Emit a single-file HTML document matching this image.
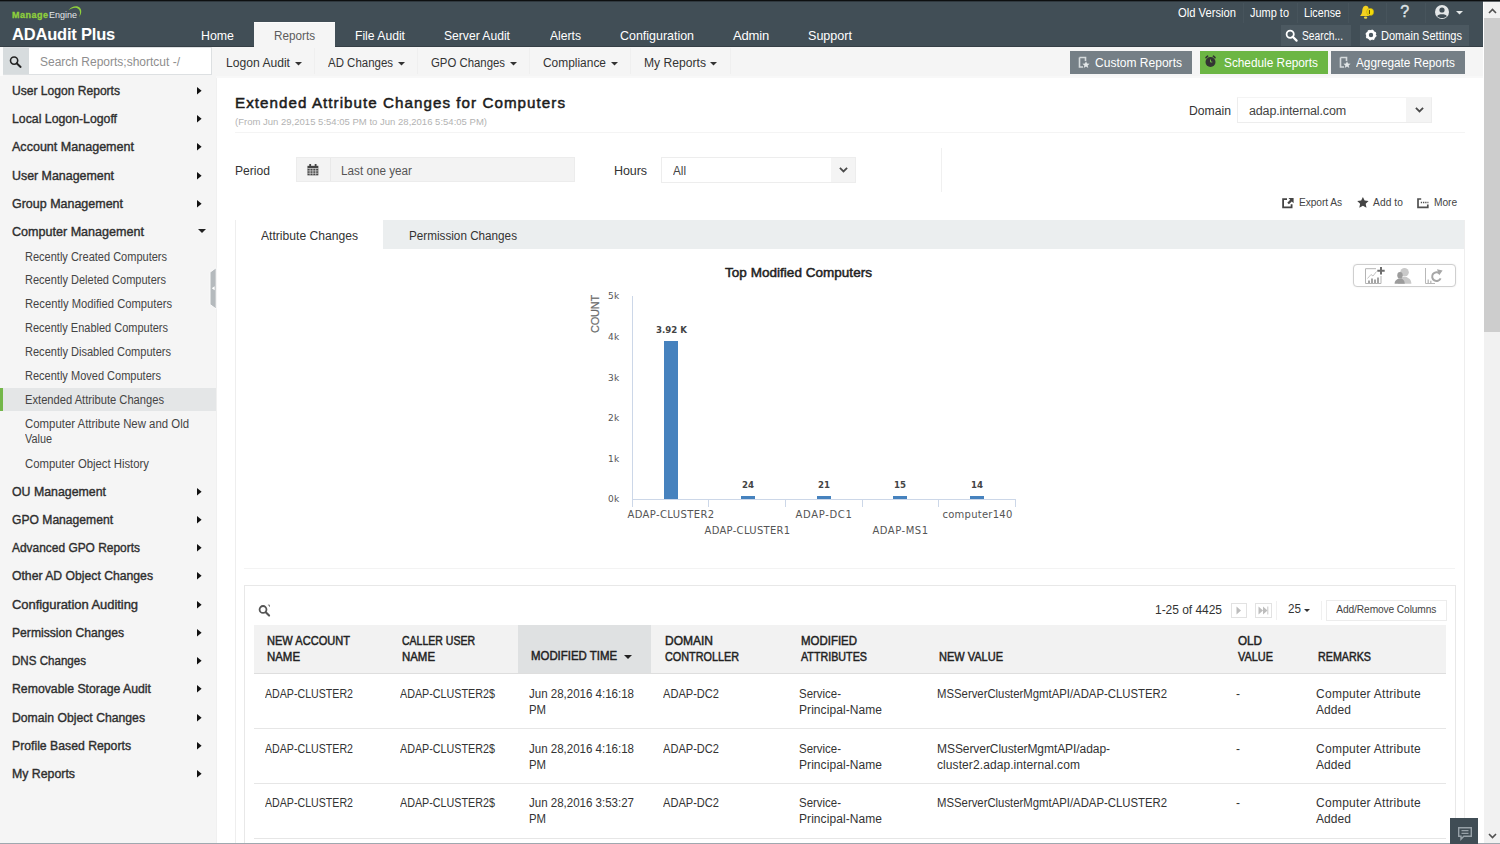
<!DOCTYPE html>
<html lang="en"><head><meta charset="utf-8"><title>ADAudit Plus - Extended Attribute Changes for Computers</title>
<style>
html,body{margin:0;padding:0;}
body{width:1500px;height:844px;overflow:hidden;background:#fff;position:relative;font-family:"Liberation Sans", sans-serif;}
.b{position:absolute;box-sizing:border-box;}
.t{position:absolute;white-space:pre;line-height:20px;height:20px;font-family:"Liberation Sans", sans-serif;}
.d{font-family:"DejaVu Sans", "Liberation Sans", sans-serif;}
svg{position:absolute;overflow:visible;}
</style></head><body>
<header>
<div class="b" style="left:0px;top:0px;width:1483px;height:47px;background:#414e56;"></div>
<div class="b" style="left:0px;top:46px;width:1483px;height:1px;background:#353f46;"></div>
<div class="b" style="left:0px;top:0px;width:1500px;height:1px;background:#0d0f10;"></div>
<div class="b" style="left:0px;top:1px;width:1500px;height:1px;background:#2a3137;opacity:.75;"></div>
<div class="b" style="left:254px;top:22px;width:81px;height:25px;background:#f5f5f5;border-top:1px solid #fcfcfc;"></div>
<svg style="left:68px;top:6px" width="16" height="14" viewBox="0 0 16 14"><path d="M0.5 4.2 C3.5 0.8 8.2 -1.2 11.6 1.6 C14.2 4 13.6 8.4 11 11.4 C12.4 8.2 12.6 4.8 10.4 2.9 C7.8 0.8 3.8 2 0.5 4.2 Z" fill="#8fd03c"/></svg>
<div class="b" style="left:1243px;top:3px;width:1px;height:20px;background:#47545c;"></div>
<div class="b" style="left:1297px;top:3px;width:1px;height:20px;background:#47545c;"></div>
<div class="b" style="left:1348px;top:3px;width:1px;height:20px;background:#47545c;"></div>
<div class="b" style="left:1386px;top:3px;width:1px;height:20px;background:#47545c;"></div>
<div class="b" style="left:1425px;top:3px;width:1px;height:20px;background:#47545c;"></div>
<svg style="left:1359px;top:5px" width="16" height="15" viewBox="0 0 16 15"><path d="M7 0.7 C4.3 0.7 3.5 3 3.3 5.4 C3.1 8 2.3 9.6 1 10.9 L10 10.9 L9.6 3 C9 1.4 8.2 0.7 7 0.7 Z" fill="#f5d21f"/><ellipse cx="6.6" cy="12.7" rx="1.7" ry="1.1" fill="#e9d545"/><circle cx="11.2" cy="6.9" r="3.6" fill="#f3da08" stroke="#8a7a20" stroke-width="0.35"/><rect x="9.9" y="4.9" width="1.1" height="4.2" rx="0.4" fill="#5e4d05"/></svg>
<svg style="left:1434px;top:4px" width="32" height="16" viewBox="0 0 32 16"><circle cx="8" cy="8" r="7" fill="#e4e7e8"/><circle cx="8" cy="6" r="2.6" fill="#404d55"/><path d="M3.2 12.2 C4 9.6 12 9.6 12.8 12.2 C11 14.6 5 14.6 3.2 12.2 Z" fill="#404d55"/><path d="M22 7 L29 7 L25.5 10.5 Z" fill="#e4e7e8"/></svg>
<div class="b" style="left:1281px;top:25px;width:70px;height:21px;background:#4c5961;"></div>
<div class="b" style="left:1360px;top:25px;width:109px;height:21px;background:#4c5961;"></div>
<svg style="left:1285px;top:29px" width="13" height="13" viewBox="0 0 13 13"><circle cx="5.2" cy="5.2" r="3.6" fill="none" stroke="#fff" stroke-width="1.8"/><path d="M8 8 L11.6 11.6" stroke="#fff" stroke-width="2.2" stroke-linecap="round"/></svg>
<svg style="left:1365px;top:29px" width="12" height="12" viewBox="0 0 12 12"><circle cx="6" cy="6" r="3.6" fill="none" stroke="#fff" stroke-width="2.8"/><circle cx="6" cy="6" r="4.9" fill="none" stroke="#fff" stroke-width="1.2" stroke-dasharray="1.9 1.95"/></svg>
<span class="t" style="left:12px;top:4.6px;font-size:9px;color:#8fd03c;letter-spacing:0.497px;font-weight:bold;-webkit-text-stroke:0.3px #8fd03c;">Manage</span>
<span class="t" style="left:48.5px;top:4.6px;font-size:9.3px;color:#e3e7ea;transform:scaleX(0.9671);transform-origin:0 50%;">Engine</span>
<span class="t" style="left:12px;top:23.5px;font-size:16.5px;color:#ffffff;letter-spacing:-0.202px;font-weight:bold;">ADAudit Plus</span>
<span class="t" style="left:201px;top:25.6px;font-size:13px;color:#ffffff;transform:scaleX(0.9514);transform-origin:0 50%;">Home</span>
<span class="t" style="left:355px;top:25.6px;font-size:13px;color:#ffffff;transform:scaleX(0.9349);transform-origin:0 50%;">File Audit</span>
<span class="t" style="left:444px;top:25.6px;font-size:13px;color:#ffffff;transform:scaleX(0.9318);transform-origin:0 50%;">Server Audit</span>
<span class="t" style="left:550px;top:25.6px;font-size:13px;color:#ffffff;transform:scaleX(0.9328);transform-origin:0 50%;">Alerts</span>
<span class="t" style="left:620px;top:25.6px;font-size:13px;color:#ffffff;transform:scaleX(0.9570);transform-origin:0 50%;">Configuration</span>
<span class="t" style="left:733px;top:25.6px;font-size:13px;color:#ffffff;letter-spacing:-0.172px;">Admin</span>
<span class="t" style="left:808px;top:25.6px;font-size:13px;color:#ffffff;transform:scaleX(0.9660);transform-origin:0 50%;">Support</span>
<span class="t" style="left:274px;top:25.6px;font-size:13px;color:#5c5c5c;transform:scaleX(0.9005);transform-origin:0 50%;">Reports</span>
<span class="t" style="left:1178px;top:2.6px;font-size:12px;color:#ffffff;transform:scaleX(0.9348);transform-origin:0 50%;">Old Version</span>
<span class="t" style="left:1250px;top:2.6px;font-size:12px;color:#ffffff;transform:scaleX(0.9136);transform-origin:0 50%;">Jump to</span>
<span class="t" style="left:1304px;top:2.6px;font-size:12px;color:#ffffff;transform:scaleX(0.8943);transform-origin:0 50%;">License</span>
<span class="t" style="left:1400.3px;top:2.2px;font-size:16px;color:#dfe3e6;-webkit-text-stroke:0.45px #dfe3e6;">?</span>
<span class="t" style="left:1302px;top:25.6px;font-size:12px;color:#ffffff;transform:scaleX(0.8536);transform-origin:0 50%;">Search...</span>
<span class="t" style="left:1381px;top:25.6px;font-size:12px;color:#ffffff;transform:scaleX(0.9200);transform-origin:0 50%;">Domain Settings</span>
</header>
<nav>
<div class="b" style="left:0px;top:47px;width:1483px;height:29px;background:#f5f5f5;"></div>
<div class="b" style="left:216px;top:76px;width:1267px;height:2px;background:#f8f8f8;"></div>
<div class="b" style="left:0px;top:47px;width:3px;height:29px;background:#fbfbfb;"></div>
<div class="b" style="left:3px;top:47px;width:209px;height:28px;background:#dde0e2;"></div>
<div class="b" style="left:3px;top:48px;width:26px;height:26px;background:#d7dcde;"></div>
<div class="b" style="left:29px;top:48px;width:182px;height:26px;background:#ffffff;"></div>
<svg style="left:9px;top:55px" width="14" height="14" viewBox="0 0 14 14"><circle cx="5.1" cy="5.6" r="3.6" fill="none" stroke="#222" stroke-width="1.6"/><path d="M7.9 8.4 L11.6 11.9" stroke="#222" stroke-width="2" stroke-linecap="round"/></svg>
<svg style="left:294.5px;top:62px" width="7" height="3.5" viewBox="0 0 7 3.5"><path d="M0 0 L7 0 L3.5 3.5 Z" fill="#333"/></svg>
<svg style="left:397.5px;top:62px" width="7" height="3.5" viewBox="0 0 7 3.5"><path d="M0 0 L7 0 L3.5 3.5 Z" fill="#333"/></svg>
<svg style="left:509.5px;top:62px" width="7" height="3.5" viewBox="0 0 7 3.5"><path d="M0 0 L7 0 L3.5 3.5 Z" fill="#333"/></svg>
<svg style="left:610.5px;top:62px" width="7" height="3.5" viewBox="0 0 7 3.5"><path d="M0 0 L7 0 L3.5 3.5 Z" fill="#333"/></svg>
<svg style="left:709.5px;top:62px" width="7" height="3.5" viewBox="0 0 7 3.5"><path d="M0 0 L7 0 L3.5 3.5 Z" fill="#333"/></svg>
<div class="b" style="left:314px;top:48px;width:1px;height:26px;background:#efefef;"></div>
<div class="b" style="left:417px;top:48px;width:1px;height:26px;background:#efefef;"></div>
<div class="b" style="left:529px;top:48px;width:1px;height:26px;background:#efefef;"></div>
<div class="b" style="left:630px;top:48px;width:1px;height:26px;background:#efefef;"></div>
<div class="b" style="left:730px;top:48px;width:1px;height:26px;background:#efefef;"></div>
<div class="b" style="left:1070px;top:51px;width:122px;height:23px;background:#757f86;"></div>
<div class="b" style="left:1200px;top:51px;width:128px;height:23px;background:#6cb644;"></div>
<div class="b" style="left:1331px;top:51px;width:134px;height:23px;background:#757f86;"></div>
<svg style="left:1078px;top:56px" width="12" height="13" viewBox="0 0 12 13"><path d="M1.5 1.5 L7.5 1.5 L7.5 5 M1.5 1.5 L1.5 11 L5 11" fill="none" stroke="#d5dadc" stroke-width="1.6"/><path d="M8 5.2 L9 7.6 L11.6 7.8 L9.6 9.4 L10.3 12 L8 10.6 L5.7 12 L6.4 9.4 L4.4 7.8 L7 7.6 Z" fill="#e3e7e8"/></svg>
<svg style="left:1339px;top:56px" width="12" height="13" viewBox="0 0 12 13"><path d="M1.5 1.5 L7.5 1.5 L7.5 5 M1.5 1.5 L1.5 11 L5 11" fill="none" stroke="#d5dadc" stroke-width="1.6"/><path d="M8 5.2 L9 7.6 L11.6 7.8 L9.6 9.4 L10.3 12 L8 10.6 L5.7 12 L6.4 9.4 L4.4 7.8 L7 7.6 Z" fill="#e3e7e8"/></svg>
<svg style="left:1204px;top:55px" width="13" height="13" viewBox="0 0 13 13"><circle cx="6.5" cy="7" r="5" fill="#333"/><path d="M2 2.6 L3.6 1.2 M11 2.6 L9.4 1.2" stroke="#333" stroke-width="1.6" stroke-linecap="round"/><path d="M6.5 4.5 L6.5 7 L8.3 7" stroke="#6cb644" stroke-width="1" fill="none"/></svg>
<span class="t" style="left:40px;top:51.6px;font-size:12.5px;color:#8e8e8e;transform:scaleX(0.9595);transform-origin:0 50%;">Search Reports;shortcut -/</span>
<span class="t" style="left:226px;top:52.6px;font-size:12.5px;color:#333;transform:scaleX(0.9690);transform-origin:0 50%;">Logon Audit</span>
<span class="t" style="left:328px;top:52.6px;font-size:12.5px;color:#333;transform:scaleX(0.9171);transform-origin:0 50%;">AD Changes</span>
<span class="t" style="left:431px;top:52.6px;font-size:12.5px;color:#333;transform:scaleX(0.9102);transform-origin:0 50%;">GPO Changes</span>
<span class="t" style="left:543px;top:52.6px;font-size:12.5px;color:#333;transform:scaleX(0.9543);transform-origin:0 50%;">Compliance</span>
<span class="t" style="left:644px;top:52.6px;font-size:12.5px;color:#333;transform:scaleX(0.9702);transform-origin:0 50%;">My Reports</span>
<span class="t" style="left:1095px;top:52.6px;font-size:12.5px;color:#ffffff;transform:scaleX(0.9633);transform-origin:0 50%;">Custom Reports</span>
<span class="t" style="left:1224px;top:52.6px;font-size:12.5px;color:#ffffff;transform:scaleX(0.9459);transform-origin:0 50%;">Schedule Reports</span>
<span class="t" style="left:1356px;top:52.6px;font-size:12.5px;color:#ffffff;transform:scaleX(0.9434);transform-origin:0 50%;">Aggregate Reports</span>
</nav>
<aside>
<div class="b" style="left:0px;top:76px;width:216px;height:768px;background:#f5f5f5;"></div>
<div class="b" style="left:216px;top:78px;width:1px;height:766px;background:#f0f0f0;"></div>
<div class="b" style="left:0px;top:388px;width:216px;height:23px;background:#e4e6e7;"></div>
<div class="b" style="left:0px;top:388px;width:3px;height:23px;background:#74b74a;"></div>
<svg style="left:197px;top:86.8px" width="4.6" height="7.6" viewBox="0 0 5 8"><path d="M0 0 L5 4 L0 8 Z" fill="#111"/></svg>
<svg style="left:197px;top:114.8px" width="4.6" height="7.6" viewBox="0 0 5 8"><path d="M0 0 L5 4 L0 8 Z" fill="#111"/></svg>
<svg style="left:197px;top:142.8px" width="4.6" height="7.6" viewBox="0 0 5 8"><path d="M0 0 L5 4 L0 8 Z" fill="#111"/></svg>
<svg style="left:197px;top:171.8px" width="4.6" height="7.6" viewBox="0 0 5 8"><path d="M0 0 L5 4 L0 8 Z" fill="#111"/></svg>
<svg style="left:197px;top:199.8px" width="4.6" height="7.6" viewBox="0 0 5 8"><path d="M0 0 L5 4 L0 8 Z" fill="#111"/></svg>
<svg style="left:198px;top:229px" width="8" height="4" viewBox="0 0 8 4"><path d="M0 0 L8 0 L4 4 Z" fill="#222"/></svg>
<svg style="left:197px;top:487.8px" width="4.6" height="7.6" viewBox="0 0 5 8"><path d="M0 0 L5 4 L0 8 Z" fill="#111"/></svg>
<svg style="left:197px;top:515.8px" width="4.6" height="7.6" viewBox="0 0 5 8"><path d="M0 0 L5 4 L0 8 Z" fill="#111"/></svg>
<svg style="left:197px;top:543.8px" width="4.6" height="7.6" viewBox="0 0 5 8"><path d="M0 0 L5 4 L0 8 Z" fill="#111"/></svg>
<svg style="left:197px;top:571.8px" width="4.6" height="7.6" viewBox="0 0 5 8"><path d="M0 0 L5 4 L0 8 Z" fill="#111"/></svg>
<svg style="left:197px;top:600.8px" width="4.6" height="7.6" viewBox="0 0 5 8"><path d="M0 0 L5 4 L0 8 Z" fill="#111"/></svg>
<svg style="left:197px;top:628.8px" width="4.6" height="7.6" viewBox="0 0 5 8"><path d="M0 0 L5 4 L0 8 Z" fill="#111"/></svg>
<svg style="left:197px;top:656.8px" width="4.6" height="7.6" viewBox="0 0 5 8"><path d="M0 0 L5 4 L0 8 Z" fill="#111"/></svg>
<svg style="left:197px;top:684.8px" width="4.6" height="7.6" viewBox="0 0 5 8"><path d="M0 0 L5 4 L0 8 Z" fill="#111"/></svg>
<svg style="left:197px;top:713.8px" width="4.6" height="7.6" viewBox="0 0 5 8"><path d="M0 0 L5 4 L0 8 Z" fill="#111"/></svg>
<svg style="left:197px;top:741.8px" width="4.6" height="7.6" viewBox="0 0 5 8"><path d="M0 0 L5 4 L0 8 Z" fill="#111"/></svg>
<svg style="left:197px;top:769.8px" width="4.6" height="7.6" viewBox="0 0 5 8"><path d="M0 0 L5 4 L0 8 Z" fill="#111"/></svg>
<svg style="left:209px;top:268px" width="8" height="40" viewBox="0 0 8 40"><path d="M7.2 -0.3 L7.2 41 L1 36.5 L1 4.2 Z" fill="#b5babd" stroke="#fbfbfb" stroke-width="1"/><path d="M5.6 18.2 L5.6 22.2 L2.8 20.2 Z" fill="#fff"/></svg>
<span class="t" style="left:12px;top:80.6px;font-size:13px;color:#2e2e2e;transform:scaleX(0.9283);transform-origin:0 50%;-webkit-text-stroke:0.38px #2e2e2e;">User Logon Reports</span>
<span class="t" style="left:12px;top:108.6px;font-size:13px;color:#2e2e2e;transform:scaleX(0.9453);transform-origin:0 50%;-webkit-text-stroke:0.38px #2e2e2e;">Local Logon-Logoff</span>
<span class="t" style="left:12px;top:136.6px;font-size:13px;color:#2e2e2e;transform:scaleX(0.9647);transform-origin:0 50%;-webkit-text-stroke:0.38px #2e2e2e;">Account Management</span>
<span class="t" style="left:12px;top:165.6px;font-size:13px;color:#2e2e2e;transform:scaleX(0.9537);transform-origin:0 50%;-webkit-text-stroke:0.38px #2e2e2e;">User Management</span>
<span class="t" style="left:12px;top:193.6px;font-size:13px;color:#2e2e2e;transform:scaleX(0.9600);transform-origin:0 50%;-webkit-text-stroke:0.38px #2e2e2e;">Group Management</span>
<span class="t" style="left:12px;top:221.6px;font-size:13px;color:#2e2e2e;transform:scaleX(0.9665);transform-origin:0 50%;-webkit-text-stroke:0.38px #2e2e2e;">Computer Management</span>
<span class="t" style="left:12px;top:481.6px;font-size:13px;color:#2e2e2e;transform:scaleX(0.9495);transform-origin:0 50%;-webkit-text-stroke:0.38px #2e2e2e;">OU Management</span>
<span class="t" style="left:12px;top:509.6px;font-size:13px;color:#2e2e2e;transform:scaleX(0.9318);transform-origin:0 50%;-webkit-text-stroke:0.38px #2e2e2e;">GPO Management</span>
<span class="t" style="left:12px;top:537.6px;font-size:13px;color:#2e2e2e;transform:scaleX(0.9178);transform-origin:0 50%;-webkit-text-stroke:0.38px #2e2e2e;">Advanced GPO Reports</span>
<span class="t" style="left:12px;top:565.6px;font-size:13px;color:#2e2e2e;transform:scaleX(0.9380);transform-origin:0 50%;-webkit-text-stroke:0.38px #2e2e2e;">Other AD Object Changes</span>
<span class="t" style="left:12px;top:594.6px;font-size:13px;color:#2e2e2e;letter-spacing:-0.055px;-webkit-text-stroke:0.38px #2e2e2e;">Configuration Auditing</span>
<span class="t" style="left:12px;top:622.6px;font-size:13px;color:#2e2e2e;transform:scaleX(0.9337);transform-origin:0 50%;-webkit-text-stroke:0.38px #2e2e2e;">Permission Changes</span>
<span class="t" style="left:12px;top:650.6px;font-size:13px;color:#2e2e2e;transform:scaleX(0.8904);transform-origin:0 50%;-webkit-text-stroke:0.38px #2e2e2e;">DNS Changes</span>
<span class="t" style="left:12px;top:678.6px;font-size:13px;color:#2e2e2e;transform:scaleX(0.9428);transform-origin:0 50%;-webkit-text-stroke:0.38px #2e2e2e;">Removable Storage Audit</span>
<span class="t" style="left:12px;top:707.6px;font-size:13px;color:#2e2e2e;transform:scaleX(0.9390);transform-origin:0 50%;-webkit-text-stroke:0.38px #2e2e2e;">Domain Object Changes</span>
<span class="t" style="left:12px;top:735.6px;font-size:13px;color:#2e2e2e;transform:scaleX(0.9411);transform-origin:0 50%;-webkit-text-stroke:0.38px #2e2e2e;">Profile Based Reports</span>
<span class="t" style="left:12px;top:763.6px;font-size:13px;color:#2e2e2e;transform:scaleX(0.9478);transform-origin:0 50%;-webkit-text-stroke:0.38px #2e2e2e;">My Reports</span>
<span class="t" style="left:25px;top:247.0px;font-size:12px;color:#444;transform:scaleX(0.9177);transform-origin:0 50%;">Recently Created Computers</span>
<span class="t" style="left:25px;top:270.0px;font-size:12px;color:#444;transform:scaleX(0.9191);transform-origin:0 50%;">Recently Deleted Computers</span>
<span class="t" style="left:25px;top:294.0px;font-size:12px;color:#444;transform:scaleX(0.9339);transform-origin:0 50%;">Recently Modified Computers</span>
<span class="t" style="left:25px;top:318.0px;font-size:12px;color:#444;transform:scaleX(0.9161);transform-origin:0 50%;">Recently Enabled Computers</span>
<span class="t" style="left:25px;top:342.0px;font-size:12px;color:#444;transform:scaleX(0.9197);transform-origin:0 50%;">Recently Disabled Computers</span>
<span class="t" style="left:25px;top:366.0px;font-size:12px;color:#444;transform:scaleX(0.9185);transform-origin:0 50%;">Recently Moved Computers</span>
<span class="t" style="left:25px;top:390.0px;font-size:12px;color:#444;transform:scaleX(0.9302);transform-origin:0 50%;">Extended Attribute Changes</span>
<span class="t" style="left:25px;top:414.0px;font-size:12px;color:#444;transform:scaleX(0.9493);transform-origin:0 50%;">Computer Attribute New and Old</span>
<span class="t" style="left:25px;top:429.0px;font-size:12px;color:#444;transform:scaleX(0.9057);transform-origin:0 50%;">Value</span>
<span class="t" style="left:25px;top:454.0px;font-size:12px;color:#444;transform:scaleX(0.9439);transform-origin:0 50%;">Computer Object History</span>
</aside>
<main>
<div class="b" style="left:1237px;top:97px;width:195px;height:26px;background:#fff;border:1px solid #ededed;border-top-color:#f4f4f4;"></div>
<div class="b" style="left:1406px;top:98px;width:25px;height:24px;background:#f4f4f4;"></div>
<svg style="left:1414.5px;top:107.4px" width="9" height="6" viewBox="0 0 9 6"><path d="M0.9 0.9 L4.5 4.4 L8.1 0.9" fill="none" stroke="#4a4a4a" stroke-width="1.8"/></svg>
<div class="b" style="left:235px;top:132px;width:1230px;height:1px;background:#f4f4f4;"></div>
<div class="b" style="left:296px;top:157px;width:279px;height:25px;background:#f3f3f3;border:1px solid #ececec;"></div>
<div class="b" style="left:330px;top:158px;width:1px;height:23px;background:#e9e9e9;"></div>
<svg style="left:306.6px;top:163.8px" width="11.8" height="11.8" viewBox="0 0 13 13"><rect x="0.5" y="2" width="12" height="10.5" fill="#444"/><rect x="2.5" y="0" width="2" height="3.5" fill="#444"/><rect x="8.5" y="0" width="2" height="3.5" fill="#444"/><path d="M0.5 5 L12.5 5 M0.5 7.6 L12.5 7.6 M0.5 10.2 L12.5 10.2 M3.4 5 L3.4 12.5 M6.5 5 L6.5 12.5 M9.6 5 L9.6 12.5" stroke="#f2f2f2" stroke-width="0.7"/></svg>
<div class="b" style="left:661px;top:157px;width:195px;height:26px;background:#fff;border:1px solid #ededed;"></div>
<div class="b" style="left:831px;top:158px;width:24px;height:24px;background:#f4f4f4;"></div>
<svg style="left:839.0px;top:167.4px" width="9" height="6" viewBox="0 0 9 6"><path d="M0.9 0.9 L4.5 4.4 L8.1 0.9" fill="none" stroke="#4a4a4a" stroke-width="1.8"/></svg>
<div class="b" style="left:941px;top:148px;width:1px;height:44px;background:#f0f0f0;"></div>
<svg style="left:1282.3px;top:197.6px" width="12" height="10.4" viewBox="0 0 12 10.4"><path d="M5 1.2 H1.1 V9.3 H9.6 V6.2" fill="none" stroke="#444" stroke-width="1.8"/><path d="M6.4 0 H11.6 V5.2 L9.8 3.4 L6.9 6.3 L5.3 4.7 L8.2 1.8 Z" fill="#444"/></svg>
<svg style="left:1357px;top:197px" width="11.8" height="10.8" viewBox="0 0 13 12"><path d="M6.5 0 L8.4 4 L12.8 4.5 L9.6 7.5 L10.5 11.9 L6.5 9.7 L2.5 11.9 L3.4 7.5 L0.2 4.5 L4.6 4 Z" fill="#444"/></svg>
<svg style="left:1416.5px;top:197.6px" width="12" height="10.4" viewBox="0 0 12 10.4"><path d="M4.2 1 H1 V9.3 H10.8 V6.6" fill="none" stroke="#505050" stroke-width="1.7"/><path d="M3.8 4.6 H11.4" stroke="#505050" stroke-width="1.5" stroke-dasharray="1.3 0.9"/></svg>
<div class="b" style="left:235px;top:220px;width:1230px;height:29px;background:#ebeeef;"></div>
<div class="b" style="left:236px;top:220px;width:147px;height:30px;background:#ffffff;"></div>
<div class="b" style="left:235px;top:220px;width:1px;height:624px;background:#eeeeee;"></div>
<div class="b" style="left:1464px;top:220px;width:1px;height:624px;background:#eeeeee;"></div>
<div class="b" style="left:1353px;top:264px;width:103px;height:23px;background:#fff;border:1px solid #cfcfcf;border-radius:4px;box-shadow:0 0 2px rgba(0,0,0,.08);"></div>
<svg style="left:1365px;top:267px" width="80" height="18" viewBox="0 0 80 18"><g fill="none" stroke="#b4b4b4" stroke-width="1"><path d="M11 1.7 H0.5 V16.5 H16 V9"/><path d="M2.5 11.5 L6 7.5 L8 9 L11.5 4.5" stroke="#c4c4c4"/></g><path d="M4 16 V13.5 M7 16 V11.5 M10 16 V12.5 M13 16 V10.5" stroke="#8f8f8f" stroke-width="1.6"/><path d="M16 0 V7.4 M12.3 3.7 H19.7" stroke="#6e6e6e" stroke-width="2"/><g fill="#c9c9c9"><circle cx="39.5" cy="5.2" r="4.3"/><path d="M33 16.8 C33 12 36 11.2 37.6 10 L41.6 10 C43.4 11.2 46.4 12 46.4 16.8 Z"/></g><g fill="#9c9c9c"><ellipse cx="35" cy="8.2" rx="2.7" ry="3.3"/><path d="M29.6 16.8 C29.8 13.2 32 12.8 33.4 11.6 L36.6 11.6 C38 12.8 39.6 13.2 39.8 16.8 Z"/></g><g fill="none" stroke="#b8b8b8"><path d="M60.5 1 V16.5 H70" stroke-width="1"/><path d="M63.2 16 V12.5 M65.8 16 V13.8" stroke-width="1.3"/></g><path d="M74.6 6.4 A4.4 4.4 0 1 0 75.6 11.4" fill="none" stroke="#a6a6a6" stroke-width="2"/><path d="M72 2.2 L77.6 3.6 L74.2 8.2 Z" fill="#a6a6a6"/></svg>
<div class="b" style="left:632px;top:296px;width:1px;height:204px;background:#ccd7e8;"></div>
<div class="b" style="left:632px;top:499px;width:384px;height:1px;background:#ccd7e8;"></div>
<div class="b" style="left:632px;top:499px;width:1px;height:8px;background:#ccd7e8;"></div>
<div class="b" style="left:708px;top:499px;width:1px;height:8px;background:#ccd7e8;"></div>
<div class="b" style="left:785px;top:499px;width:1px;height:8px;background:#ccd7e8;"></div>
<div class="b" style="left:862px;top:499px;width:1px;height:8px;background:#ccd7e8;"></div>
<div class="b" style="left:938px;top:499px;width:1px;height:8px;background:#ccd7e8;"></div>
<div class="b" style="left:1015px;top:499px;width:1px;height:8px;background:#ccd7e8;"></div>
<div class="b" style="left:664px;top:341px;width:14px;height:158px;background:#4682be;"></div>
<div class="b" style="left:741px;top:496px;width:14px;height:3px;background:#4682be;"></div>
<div class="b" style="left:817px;top:496px;width:14px;height:3px;background:#4682be;"></div>
<div class="b" style="left:893px;top:496px;width:14px;height:3px;background:#4682be;"></div>
<div class="b" style="left:970px;top:496px;width:14px;height:3px;background:#4682be;"></div>
<div class="b" style="left:244px;top:568px;width:1211px;height:1px;background:#f3f3f3;"></div>
<div class="b" style="left:244px;top:585px;width:1212px;height:270px;background:#fff;border:1px solid #e8e8e8;"></div>
<svg style="left:258px;top:604.3px" width="13.6" height="12.6" viewBox="0 0 13 12"><circle cx="4.8" cy="5.2" r="3.3" fill="none" stroke="#555" stroke-width="1.7"/><path d="M7.4 7.8 L10.6 11" stroke="#555" stroke-width="2" stroke-linecap="round"/><path d="M9.5 1 L11 1 L11 2.6" stroke="#777" stroke-width="0.9" fill="none"/></svg>
<div class="b" style="left:1231px;top:603px;width:16px;height:15px;background:#fff;border:1px solid #e2e2e2;"></div>
<div class="b" style="left:1255px;top:603px;width:17px;height:15px;background:#fff;border:1px solid #e2e2e2;"></div>
<svg style="left:1236px;top:606px" width="6" height="9" viewBox="0 0 6 9"><path d="M0.5 0.5 L5 4.5 L0.5 8.5 Z" fill="#bdbdbd"/></svg>
<svg style="left:1258px;top:606px" width="11" height="9" viewBox="0 0 11 9"><path d="M0.5 0.5 L5 4.5 L0.5 8.5 Z M5 0.5 L9.5 4.5 L5 8.5 Z" fill="#bdbdbd"/><rect x="9.3" y="0.5" width="1" height="8" fill="#c8c8c8"/></svg>
<div class="b" style="left:1276px;top:601px;width:1px;height:19px;background:#f0f0f0;"></div>
<svg style="left:1303.5px;top:608.7px" width="6" height="3" viewBox="0 0 6 3"><path d="M0 0 L6 0 L3 3 Z" fill="#333"/></svg>
<div class="b" style="left:1321px;top:601px;width:1px;height:19px;background:#f0f0f0;"></div>
<div class="b" style="left:1326px;top:600px;width:121px;height:21px;background:#fff;border:1px solid #ececec;"></div>
<div class="b" style="left:254px;top:625px;width:1192px;height:49px;background:#f2f2f2;border-bottom:1px solid #dedede;"></div>
<div class="b" style="left:518px;top:625px;width:133px;height:48px;background:#dfe1e2;"></div>
<svg style="left:624px;top:655px" width="8" height="4" viewBox="0 0 8 4"><path d="M0 0 L8 0 L4 4 Z" fill="#222"/></svg>
<div class="b" style="left:254px;top:728px;width:1192px;height:1px;background:#e6e6e6;"></div>
<div class="b" style="left:254px;top:783px;width:1192px;height:1px;background:#e6e6e6;"></div>
<div class="b" style="left:254px;top:838px;width:1192px;height:1px;background:#e6e6e6;"></div>
<span class="t" style="left:235px;top:93.0px;font-size:15.2px;color:#1c1c1c;letter-spacing:1.036px;-webkit-text-stroke:0.5px #1c1c1c;">Extended Attribute Changes for Computers</span>
<span class="t" style="left:235px;top:112.2px;font-size:9.5px;color:#b3b3b3;letter-spacing:0.011px;">(From Jun 29,2015 5:54:05 PM to Jun 28,2016 5:54:05 PM)</span>
<span class="t" style="left:1189px;top:100.6px;font-size:12.5px;color:#333;transform:scaleX(0.9750);transform-origin:0 50%;">Domain</span>
<span class="t" style="left:1249px;top:100.6px;font-size:12.5px;color:#444;letter-spacing:-0.140px;">adap.internal.com</span>
<span class="t" style="left:235px;top:160.6px;font-size:12.5px;color:#333;transform:scaleX(0.9684);transform-origin:0 50%;">Period</span>
<span class="t" style="left:341px;top:160.6px;font-size:12.5px;color:#555;transform:scaleX(0.9373);transform-origin:0 50%;">Last one year</span>
<span class="t" style="left:614px;top:160.6px;font-size:12.5px;color:#333;letter-spacing:-0.069px;">Hours</span>
<span class="t" style="left:673px;top:160.6px;font-size:12.5px;color:#444;transform:scaleX(0.9348);transform-origin:0 50%;">All</span>
<span class="t" style="left:1299px;top:192.9px;font-size:10.2px;color:#444;letter-spacing:-0.068px;">Export As</span>
<span class="t" style="left:1373px;top:192.9px;font-size:10.2px;color:#444;letter-spacing:0.089px;">Add to</span>
<span class="t" style="left:1434px;top:192.9px;font-size:10.2px;color:#444;letter-spacing:-0.055px;">More</span>
<span class="t" style="left:261px;top:225.6px;font-size:12.5px;color:#333;transform:scaleX(0.9694);transform-origin:0 50%;">Attribute Changes</span>
<span class="t" style="left:409px;top:225.6px;font-size:12.5px;color:#333;transform:scaleX(0.9363);transform-origin:0 50%;">Permission Changes</span>
<span class="t" style="left:725px;top:262.6px;font-size:13.5px;color:#222;letter-spacing:0.031px;-webkit-text-stroke:0.5px #222;">Top Modified Computers</span>
<span class="t d" style="left:608px;top:285.7px;font-size:9px;color:#555;letter-spacing:0.273px;">5k</span>
<span class="t d" style="left:608px;top:326.7px;font-size:9px;color:#555;letter-spacing:0.273px;">4k</span>
<span class="t d" style="left:608px;top:367.7px;font-size:9px;color:#555;letter-spacing:0.273px;">3k</span>
<span class="t d" style="left:608px;top:407.7px;font-size:9px;color:#555;letter-spacing:0.273px;">2k</span>
<span class="t d" style="left:608px;top:448.7px;font-size:9px;color:#555;letter-spacing:0.273px;">1k</span>
<span class="t d" style="left:608px;top:488.7px;font-size:9px;color:#555;letter-spacing:0.273px;">0k</span>
<span class="t" style="left:575.6px;top:304.4px;font-size:11px;color:#6a6a6a;letter-spacing:-0.222px;-webkit-text-stroke:0.2px #6a6a6a;transform:rotate(-90deg);transform-origin:center;width:38px;text-align:center;">COUNT</span>
<span class="t d" style="left:655.6px;top:319.7px;font-size:9.5px;color:#444;transform:scaleX(0.9088);transform-origin:0 50%;font-weight:bold;">3.92 K</span>
<span class="t d" style="left:742px;top:474.7px;font-size:9.5px;color:#444;transform:scaleX(0.9067);transform-origin:0 50%;font-weight:bold;">24</span>
<span class="t d" style="left:818px;top:474.7px;font-size:9.5px;color:#444;transform:scaleX(0.9067);transform-origin:0 50%;font-weight:bold;">21</span>
<span class="t d" style="left:894px;top:474.7px;font-size:9.5px;color:#444;transform:scaleX(0.9067);transform-origin:0 50%;font-weight:bold;">15</span>
<span class="t d" style="left:971px;top:474.7px;font-size:9.5px;color:#444;transform:scaleX(0.9067);transform-origin:0 50%;font-weight:bold;">14</span>
<span class="t d" style="left:627.5px;top:504.7px;font-size:10px;color:#555;letter-spacing:0.377px;">ADAP-CLUSTER2</span>
<span class="t d" style="left:704.5px;top:520.7px;font-size:10px;color:#555;letter-spacing:0.300px;">ADAP-CLUSTER1</span>
<span class="t d" style="left:795.5px;top:504.7px;font-size:10px;color:#555;letter-spacing:0.666px;">ADAP-DC1</span>
<span class="t d" style="left:872.5px;top:520.7px;font-size:10px;color:#555;letter-spacing:0.504px;">ADAP-MS1</span>
<span class="t d" style="left:942.5px;top:504.7px;font-size:10px;color:#555;letter-spacing:0.243px;">computer140</span>
<span class="t" style="left:1155px;top:600.0px;font-size:12px;color:#333;letter-spacing:-0.033px;">1-25 of 4425</span>
<span class="t" style="left:1288px;top:599.0px;font-size:12px;color:#333;transform:scaleX(0.9731);transform-origin:0 50%;">25</span>
<span class="t" style="left:1336.3px;top:600.1px;font-size:10.2px;color:#444;letter-spacing:-0.107px;">Add/Remove Columns</span>
<span class="t" style="left:267px;top:631.0px;font-size:12px;color:#222;transform:scaleX(0.9222);transform-origin:0 50%;-webkit-text-stroke:0.45px #222;">NEW ACCOUNT</span>
<span class="t" style="left:267px;top:647.0px;font-size:12px;color:#222;transform:scaleX(0.9518);transform-origin:0 50%;-webkit-text-stroke:0.45px #222;">NAME</span>
<span class="t" style="left:402px;top:631.0px;font-size:12px;color:#222;transform:scaleX(0.8756);transform-origin:0 50%;-webkit-text-stroke:0.45px #222;">CALLER USER</span>
<span class="t" style="left:402px;top:647.0px;font-size:12px;color:#222;transform:scaleX(0.9518);transform-origin:0 50%;-webkit-text-stroke:0.45px #222;">NAME</span>
<span class="t" style="left:531px;top:646.0px;font-size:12px;color:#222;transform:scaleX(0.9508);transform-origin:0 50%;-webkit-text-stroke:0.45px #222;">MODIFIED TIME</span>
<span class="t" style="left:665px;top:631.0px;font-size:12px;color:#222;letter-spacing:0.000px;-webkit-text-stroke:0.45px #222;">DOMAIN</span>
<span class="t" style="left:665px;top:647.0px;font-size:12px;color:#222;transform:scaleX(0.9023);transform-origin:0 50%;-webkit-text-stroke:0.45px #222;">CONTROLLER</span>
<span class="t" style="left:801px;top:631.0px;font-size:12px;color:#222;transform:scaleX(0.9545);transform-origin:0 50%;-webkit-text-stroke:0.45px #222;">MODIFIED</span>
<span class="t" style="left:801px;top:647.0px;font-size:12px;color:#222;transform:scaleX(0.8945);transform-origin:0 50%;-webkit-text-stroke:0.45px #222;">ATTRIBUTES</span>
<span class="t" style="left:939px;top:647.0px;font-size:12px;color:#222;transform:scaleX(0.9169);transform-origin:0 50%;-webkit-text-stroke:0.45px #222;">NEW VALUE</span>
<span class="t" style="left:1238px;top:631.0px;font-size:12px;color:#222;transform:scaleX(0.9722);transform-origin:0 50%;-webkit-text-stroke:0.45px #222;">OLD</span>
<span class="t" style="left:1238px;top:647.0px;font-size:12px;color:#222;transform:scaleX(0.9098);transform-origin:0 50%;-webkit-text-stroke:0.45px #222;">VALUE</span>
<span class="t" style="left:1318px;top:647.0px;font-size:12px;color:#222;transform:scaleX(0.8931);transform-origin:0 50%;-webkit-text-stroke:0.45px #222;">REMARKS</span>
<span class="t" style="left:265px;top:683.6px;font-size:12px;color:#333;transform:scaleX(0.8857);transform-origin:0 50%;">ADAP-CLUSTER2</span>
<span class="t" style="left:400px;top:683.6px;font-size:12px;color:#333;transform:scaleX(0.8960);transform-origin:0 50%;">ADAP-CLUSTER2$</span>
<span class="t" style="left:529px;top:683.6px;font-size:12px;color:#333;transform:scaleX(0.9595);transform-origin:0 50%;">Jun 28,2016 4:16:18</span>
<span class="t" style="left:529px;top:699.6px;font-size:12px;color:#333;transform:scaleX(0.9444);transform-origin:0 50%;">PM</span>
<span class="t" style="left:663px;top:683.6px;font-size:12px;color:#333;transform:scaleX(0.9228);transform-origin:0 50%;">ADAP-DC2</span>
<span class="t" style="left:799px;top:683.6px;font-size:12px;color:#333;transform:scaleX(0.9542);transform-origin:0 50%;">Service-</span>
<span class="t" style="left:799px;top:699.6px;font-size:12px;color:#333;letter-spacing:0.069px;">Principal-Name</span>
<span class="t" style="left:937px;top:683.6px;font-size:12px;color:#333;transform:scaleX(0.9450);transform-origin:0 50%;">MSServerClusterMgmtAPI/ADAP-CLUSTER2</span>
<span class="t" style="left:1236px;top:683.6px;font-size:12px;color:#333;letter-spacing:0.000px;">-</span>
<span class="t" style="left:1316px;top:683.6px;font-size:12px;color:#333;letter-spacing:0.274px;">Computer Attribute</span>
<span class="t" style="left:1316px;top:699.6px;font-size:12px;color:#333;letter-spacing:0.059px;">Added</span>
<span class="t" style="left:265px;top:738.8px;font-size:12px;color:#333;transform:scaleX(0.8857);transform-origin:0 50%;">ADAP-CLUSTER2</span>
<span class="t" style="left:400px;top:738.8px;font-size:12px;color:#333;transform:scaleX(0.8960);transform-origin:0 50%;">ADAP-CLUSTER2$</span>
<span class="t" style="left:529px;top:738.8px;font-size:12px;color:#333;transform:scaleX(0.9595);transform-origin:0 50%;">Jun 28,2016 4:16:18</span>
<span class="t" style="left:529px;top:754.6px;font-size:12px;color:#333;transform:scaleX(0.9444);transform-origin:0 50%;">PM</span>
<span class="t" style="left:663px;top:738.8px;font-size:12px;color:#333;transform:scaleX(0.9228);transform-origin:0 50%;">ADAP-DC2</span>
<span class="t" style="left:799px;top:738.8px;font-size:12px;color:#333;transform:scaleX(0.9542);transform-origin:0 50%;">Service-</span>
<span class="t" style="left:799px;top:754.6px;font-size:12px;color:#333;letter-spacing:0.069px;">Principal-Name</span>
<span class="t" style="left:937px;top:738.8px;font-size:12px;color:#333;letter-spacing:-0.062px;">MSServerClusterMgmtAPI/adap-</span>
<span class="t" style="left:937px;top:754.6px;font-size:12px;color:#333;letter-spacing:0.087px;">cluster2.adap.internal.com</span>
<span class="t" style="left:1236px;top:738.8px;font-size:12px;color:#333;letter-spacing:0.000px;">-</span>
<span class="t" style="left:1316px;top:738.8px;font-size:12px;color:#333;letter-spacing:0.274px;">Computer Attribute</span>
<span class="t" style="left:1316px;top:754.6px;font-size:12px;color:#333;letter-spacing:0.059px;">Added</span>
<span class="t" style="left:265px;top:793.1px;font-size:12px;color:#333;transform:scaleX(0.8857);transform-origin:0 50%;">ADAP-CLUSTER2</span>
<span class="t" style="left:400px;top:793.1px;font-size:12px;color:#333;transform:scaleX(0.8960);transform-origin:0 50%;">ADAP-CLUSTER2$</span>
<span class="t" style="left:529px;top:793.1px;font-size:12px;color:#333;transform:scaleX(0.9595);transform-origin:0 50%;">Jun 28,2016 3:53:27</span>
<span class="t" style="left:529px;top:809.1px;font-size:12px;color:#333;transform:scaleX(0.9444);transform-origin:0 50%;">PM</span>
<span class="t" style="left:663px;top:793.1px;font-size:12px;color:#333;transform:scaleX(0.9228);transform-origin:0 50%;">ADAP-DC2</span>
<span class="t" style="left:799px;top:793.1px;font-size:12px;color:#333;transform:scaleX(0.9542);transform-origin:0 50%;">Service-</span>
<span class="t" style="left:799px;top:809.1px;font-size:12px;color:#333;letter-spacing:0.069px;">Principal-Name</span>
<span class="t" style="left:937px;top:793.1px;font-size:12px;color:#333;transform:scaleX(0.9450);transform-origin:0 50%;">MSServerClusterMgmtAPI/ADAP-CLUSTER2</span>
<span class="t" style="left:1236px;top:793.1px;font-size:12px;color:#333;letter-spacing:0.000px;">-</span>
<span class="t" style="left:1316px;top:793.1px;font-size:12px;color:#333;letter-spacing:0.274px;">Computer Attribute</span>
<span class="t" style="left:1316px;top:809.1px;font-size:12px;color:#333;letter-spacing:0.059px;">Added</span>
</main>
<footer>
<div class="b" style="left:0px;top:843px;width:1500px;height:1px;background:#9fa8af;"></div>
<div class="b" style="left:1450px;top:818px;width:28px;height:26px;background:#404d55;"></div>
<svg style="left:1457px;top:826px" width="16" height="15" viewBox="0 0 16 15"><path d="M1.7 1.7 H14.3 V10.3 H6.8 L4 13.2 V10.3 H1.7 Z" fill="none" stroke="#97a1a8" stroke-width="1.4"/><path d="M4.5 4.7 H11.5 M4.5 7.3 H11.5" stroke="#97a1a8" stroke-width="1.3"/></svg>
<div class="b" style="left:1484px;top:2px;width:16px;height:842px;background:#f1f1f1;"></div>
<div class="b" style="left:1484px;top:18px;width:16px;height:314px;background:#cdcdcd;"></div>
<div class="b" style="left:1484px;top:843px;width:16px;height:1px;background:#9fa8af;"></div>
<svg style="left:1488px;top:8px" width="9" height="6" viewBox="0 0 9 6"><path d="M1 5 L4.5 1.5 L8 5" fill="none" stroke="#505050" stroke-width="1.6"/></svg>
<svg style="left:1488px;top:833px" width="9" height="6" viewBox="0 0 9 6"><path d="M1 1 L4.5 4.5 L8 1" fill="none" stroke="#505050" stroke-width="1.6"/></svg>
</footer>
</body></html>
